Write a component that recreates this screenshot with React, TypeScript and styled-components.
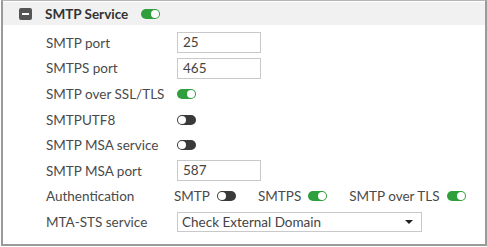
import React from 'react';
import styled, { createGlobalStyle } from 'styled-components';

const Global = createGlobalStyle`
  html, body { margin: 0; padding: 0; background: #fff; }
  body { font-family: Lato, "Liberation Sans", sans-serif; }
`;

const Frame = styled.div`
  box-sizing: border-box;
  width: 486px;
  height: 246px;
  margin-left: 1px;
  border: 2px solid #9a9a9a;
  border-top: 1px solid #b5b5b5;
  background: #fff;
`;

const Header = styled.div`
  display: flex;
  align-items: center;
  height: 23px;
  margin-top: 1px;
  padding-left: 16px;
  background: #f1f1f1;
`;

const Collapse = styled.span`
  position: relative;
  width: 13px;
  height: 12px;
  border-radius: 2px;
  background: #555;
  margin-right: 13px;
  &::after {
    content: '';
    position: absolute;
    left: 3px;
    right: 3px;
    top: 5px;
    height: 2px;
    background: #fff;
  }
`;

const Title = styled.span`
  font-size: 13.5px;
  font-weight: 700;
  color: #333;
  margin-right: 13px;
`;

const Body = styled.div`
  display: grid;
  grid-template-columns: 131px 1fr;
  grid-auto-rows: 25.6px;
  padding: 5px 0 0 43px;
  align-items: center;
`;

const Label = styled.div`
  font-size: 13.5px;
  color: #4a4a4a;
  white-space: nowrap;
`;

const Cell = styled.div<{ shift?: number }>`
  display: flex;
  align-items: center;
  white-space: nowrap;
  margin-left: ${p => p.shift ?? 0}px;
`;

const Input = styled.div`
  box-sizing: border-box;
  width: 84px;
  height: 21px;
  border: 1px solid #c9c9c9;
  padding-left: 5px;
  font-size: 13.5px;
  line-height: 19px;
  color: #444;
`;

const Select = styled.div`
  box-sizing: border-box;
  display: flex;
  align-items: center;
  justify-content: space-between;
  width: 245px;
  height: 20px;
  border: 1px solid #c9c9c9;
  padding: 0 8px 0 4px;
  font-size: 13.5px;
  color: #444;
`;

const Caret = styled.span`
  width: 0;
  height: 0;
  border-left: 4px solid transparent;
  border-right: 4px solid transparent;
  border-top: 4px solid #222;
`;

const Track = styled.span<{ on?: boolean }>`
  position: relative;
  box-sizing: border-box;
  display: inline-block;
  flex: none;
  width: 19px;
  height: 10px;
  border-radius: 5px;
  background: ${p => (p.on ? '#2f9e3c' : '#3a3a3a')};
  &::after {
    content: '';
    position: absolute;
    top: 1px;
    ${p => (p.on ? 'right: 1px;' : 'left: 1px;')}
    width: 8px;
    height: 8px;
    border-radius: 50%;
    background: #fff;
  }
`;

const AuthItem = styled.span`
  display: inline-flex;
  align-items: center;
  gap: 7px;
  font-size: 13.5px;
  color: #4a4a4a;
  margin-right: 22px;
  &:last-child { margin-right: 0; }
`;

const Toggle: React.FC<{ on?: boolean }> = ({ on }) => <Track on={on} />;

export default function App() {
  return (
    <>
      <Global />
      <Frame>
        <Header>
          <Collapse />
          <Title>SMTP Service</Title>
          <Toggle on />
        </Header>
        <Body>
          <Label>SMTP port</Label>
          <Cell><Input>25</Input></Cell>
          <Label>SMTPS port</Label>
          <Cell><Input>465</Input></Cell>
          <Label>SMTP over SSL/TLS</Label>
          <Cell><Toggle on /></Cell>
          <Label>SMTPUTF8</Label>
          <Cell><Toggle /></Cell>
          <Label>SMTP MSA service</Label>
          <Cell><Toggle /></Cell>
          <Label>SMTP MSA port</Label>
          <Cell><Input>587</Input></Cell>
          <Label>Authentication</Label>
          <Cell shift={-3}>
            <AuthItem>SMTP <Toggle /></AuthItem>
            <AuthItem>SMTPS <Toggle on /></AuthItem>
            <AuthItem>SMTP over TLS <Toggle on /></AuthItem>
          </Cell>
          <Label>MTA-STS service</Label>
          <Cell>
            <Select>
              <span>Check External Domain</span>
              <Caret />
            </Select>
          </Cell>
        </Body>
      </Frame>
    </>
  );
}
